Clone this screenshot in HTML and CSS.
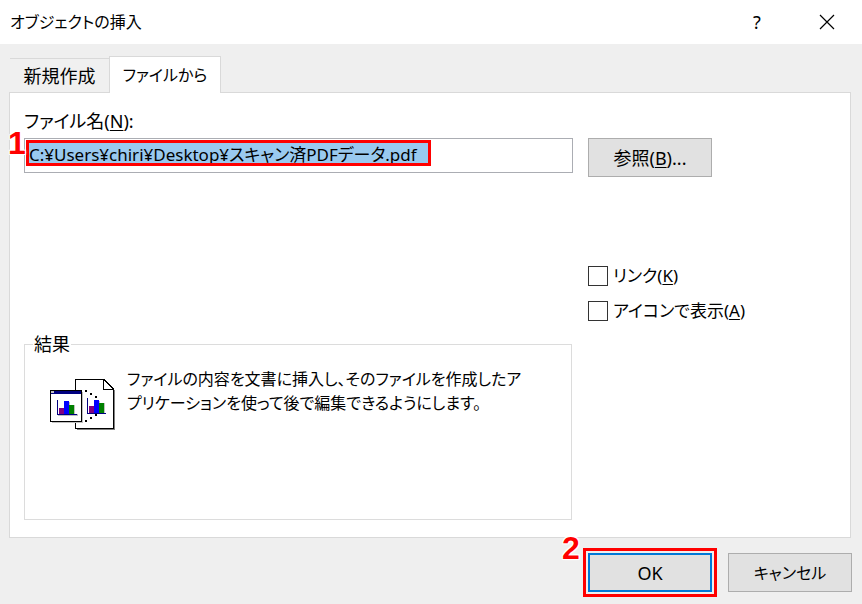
FILE: index.html
```html
<!DOCTYPE html>
<html lang="ja">
<head>
  <meta charset="UTF-8" />
  <title>オブジェクトの挿入</title>
  <link rel="stylesheet" href="styles.css">
</head>

<body>
  <!-- Title bar -->
  <header class="title-bar">
    <h1>オブジェクトの挿入</h1>
    <button type="button" class="title-button" aria-label="ヘルプ">?</button>
    <button type="button" class="title-button" aria-label="閉じる">
      <svg width="16" height="16" viewBox="0 0 16 16"><path d="M1 1L15 15M15 1L1 15" stroke="#000" stroke-width="1.2" fill="none" /></svg>
    </button>
  </header>

  <form class="dialog">
    <!-- Tabs -->
    <div class="tabs" role="tablist">
      <button type="button" class="tab" role="tab" aria-selected="false">新規作成</button>
      <button type="button" class="tab active" role="tab" aria-selected="true">ファイルから</button>
    </div>

    <!-- Create from file -->
    <div class="panel" role="tabpanel">
      <label class="file-label" for="file-name">ファイル名(<u>N</u>):</label>
      <div class="file-row">
        <div class="file-box">
          <span class="step step-one">1</span>
          <input type="text" id="file-name" class="file-name" value="C:¥Users¥chiri¥Desktop¥スキャン済PDFデータ.pdf">
        </div>
        <div><button type="button" class="button">参照(<u>B</u>)...</button></div>
      </div>

      <div class="options">
        <label class="option"><input type="checkbox"><span>リンク(<u>K</u>)</span></label>
        <label class="option"><input type="checkbox"><span>アイコンで表示(<u>A</u>)</span></label>
      </div>

      <div class="result-row">
        <fieldset class="result">
          <legend>結果</legend>
          <div class="result-body">
            <svg class="result-icon" width="66" height="52" viewBox="10 9 66 52" shape-rendering="crispEdges">
              <!-- document -->
              <path d="M37 59H74V20H75V60H37Z" fill="#808080" />
              <path d="M35 9H64L74 19V59H35Z" fill="#000" />
              <path d="M36 10H63V20H73V58H36Z" fill="#fff" />
              <path d="M64 11V19H72Z" fill="#fff" />
              <!-- window -->
              <path d="M12 52H42V22H43V53H12Z" fill="#c0c0c0" />
              <rect x="10" y="20" width="32" height="32" fill="#000" />
              <rect x="11" y="24" width="30" height="27" fill="#fff" />
              <rect x="11" y="21" width="30" height="3" fill="#000080" />
              <rect x="11" y="21" width="3" height="2" fill="#c0c0c0" />
              <!-- chart in the window -->
              <path d="M29 32H30V35H35V44H38V46H18V45H29Z" fill="#c0c0c0" />
              <path d="M17 30H18V44H37V45H17Z" fill="#000080" />
              <rect x="19" y="38" width="5" height="6" fill="#800080" />
              <rect x="24" y="31" width="5" height="13" fill="#00f" />
              <rect x="29" y="35" width="5" height="9" fill="#008000" />
              <!-- chart in the document -->
              <path d="M59 31H60V33H65V43H59Z" fill="#c0c0c0" />
              <path d="M47 28H48V43H66V44H47Z" fill="#000080" />
              <rect x="49" y="36" width="5" height="7" fill="#800080" />
              <rect x="54" y="30" width="5" height="13" fill="#00f" />
              <rect x="59" y="33" width="5" height="10" fill="#008000" />
              <path d="M45 20h2v2h-2zM50 23h2v2h-2zM55 26h2v2h-2zM55 44h2v2h-2zM50 47h2v2h-2zM45 50h2v2h-2z" fill="#000" />
            </svg>
            <p>ファイルの内容を文書に挿入し、そのファイルを作成したアプリケーションを使って後で編集できるようにします。</p>
          </div>
        </fieldset>
      </div>
    </div>

    <!-- Dialog buttons -->
    <div class="actions">
      <div class="callout">
        <span class="step step-two">2</span>
        <button type="submit" class="button primary">OK</button>
      </div>
      <button type="button" class="button cancel">キャンセル</button>
    </div>
  </form>
</body>
</html>
```

FILE: styles.css
```css
* {
  margin: 0;
  padding: 0;
  box-sizing: border-box;
}
body {
  min-height: 100vh;
  background-color: #efefef;
  color: #000;
  font-family: "Noto Sans", "Noto Sans CJK JP", sans-serif;
  font-size: 18px;
  font-weight: 400;
  font-feature-settings: "palt";
  line-height: 24px;
}
button,
input {
  font: inherit;
  font-feature-settings: inherit;
  color: inherit;
}
u {
  text-decoration-thickness: 1px;
  text-underline-offset: 2px;
}
/* Title bar */
.title-bar {
  display: flex;
  align-items: center;
  height: 44px;
  padding-left: 10px;
  background-color: #fff;
}
.title-bar h1 {
  flex: 1;
  font-size: 16px;
  font-weight: 400;
}
.title-button {
  display: flex;
  align-items: center;
  justify-content: center;
  width: 70px;
  height: 44px;
  border: none;
  background: none;
}
/* Tabs */
.dialog {
  padding: 12px 10px 7px 9px;
}
.tabs {
  display: flex;
  align-items: flex-end;
  padding-left: 1px;
}
.tab {
  height: 34px;
  width: 99px;
  border: 1px solid #d9d9d9;
  border-width: 1px 0 0 0;
  background-color: #f0f0f0;
}
.tab.active {
  position: relative;
  z-index: 1;
  width: 112px;
  height: 37px;
  margin-bottom: -1px;
  border-width: 1px 1px 0 1px;
  background-color: #fff;
  font-size: 16px;
}
/* Panel */
.panel {
  margin-right: 1px;
  padding: 16px 14px 17px;
  border: 1px solid #d9d9d9;
  background-color: #fff;
}
.file-label {
  display: block;
  margin-bottom: 5px;
}
.file-row,
.result-row {
  display: grid;
  grid-template-columns: minmax(0, 1fr) 248px;
  column-gap: 15px;
  align-items: start;
}
.file-box {
  position: relative;
  height: 35px;
  padding: 1px;
  border: 1px solid #abadb3;
}
.file-name {
  display: block;
  width: 405px;
  max-width: 100%;
  height: 26px;
  border: 3px solid #f00;
  background-color: #99c9ef;
  font-size: 17px;
  outline: none;
}
.button {
  width: 124px;
  height: 39px;
  border: 1px solid #adadad;
  background-color: #e1e1e1;
}
.button.primary {
  display: block;
  border: 2px solid #0078d7;
}
.button.cancel {
  font-size: 16px;
}
/* Check boxes */
.options {
  display: grid;
  justify-content: end;
  grid-template-columns: 248px;
  row-gap: 11px;
  margin-top: 87px;
  font-size: 17px;
}
.option {
  display: flex;
  align-items: center;
  gap: 5px;
}
.option input {
  appearance: none;
  width: 20px;
  height: 20px;
  border: 1px solid #333;
  background-color: #fff;
}
/* Result */
.result-row {
  margin-top: 9px;
}
.result {
  height: 188px;
  margin-right: 1px;
  padding: 11px 40px 12px 25px;
  border: 1px solid #dcdcdc;
}
.result legend {
  margin-left: -17px;
  padding: 0 1px;
}
.result-body {
  display: flex;
  align-items: flex-start;
  gap: 11px;
}
.result-icon {
  flex: none;
  margin-top: 12px;
}
.result-body p {
  flex: 1;
  font-size: 16px;
}
/* Dialog buttons */
.actions {
  display: flex;
  justify-content: flex-end;
  align-items: center;
  gap: 11px;
  margin-top: 10px;
}
.callout {
  position: relative;
  padding: 2px;
  border: 3px solid #f00;
}
/* Numbered marks over the controls */
.step {
  position: absolute;
  color: #f00;
  font: bold 32px/32px "Liberation Sans", Arial, sans-serif;
  text-shadow: 1px 1px #fff, -1px -1px #fff, 1px -1px #fff, -1px 1px #fff, 0 0 3px #fff;
}
.step-one {
  top: -12px;
  left: -17px;
}
.step-two {
  top: -19px;
  left: -24px;
}
```
